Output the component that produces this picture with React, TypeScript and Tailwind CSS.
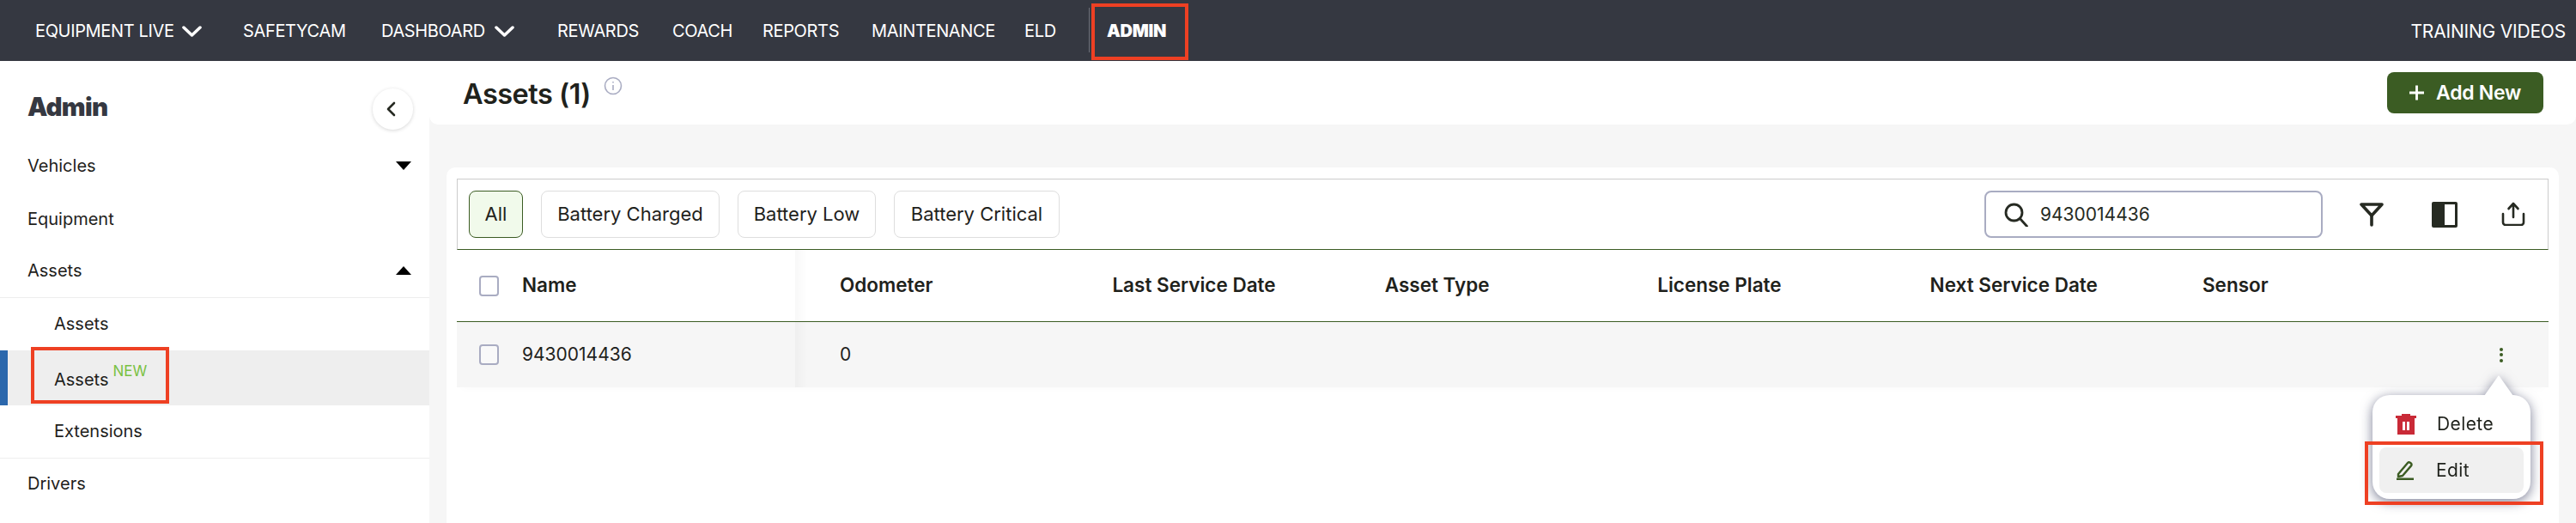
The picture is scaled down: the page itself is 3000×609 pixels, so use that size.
import type { ReactNode } from 'react'

const font = "font-['Inter',sans-serif]"

function NavChevron() {
  return (
    <svg viewBox="0 0 23 13" className="w-[23px] h-[13px] ml-[11px] mt-[1px]" fill="none" stroke="#fff" strokeWidth="3.5" strokeLinecap="round" strokeLinejoin="round">
      <path d="M2 2l9.5 9L21 2" />
    </svg>
  )
}

function Caret({ up }: { up?: boolean }) {
  return (
    <svg viewBox="0 0 18 10" className="w-[18px] h-[10px]" fill="#000">
      <path d={up ? 'M9 0l9 10H0z' : 'M0 0h18L9 10z'} />
    </svg>
  )
}

function Checkbox() {
  return <div className="w-[23px] h-[24px] border-[2.5px] border-[#a9acc2] rounded-[4px] bg-white/40 shrink-0" />
}

function Chip({ w, active, children }: { w: string; active?: boolean; children: ReactNode }) {
  return (
    <div
      className={`${w} h-[55px] flex items-center justify-center rounded-[8px] text-[22px] text-[#1f221c] border-[1.5px] ${
        active ? 'bg-[#f1faeb] border-[#3b5c23]' : 'bg-white border-[#dedede]'
      }`}
    >
      {children}
    </div>
  )
}

function SideRow({ label, caret, up }: { label: string; caret?: boolean; up?: boolean }) {
  return (
    <div className="h-[62px] pl-[32px] pr-[21px] flex items-center justify-between text-[20px] text-[#1f221c]">
      <span>{label}</span>
      {caret && <Caret up={up} />}
    </div>
  )
}

function Sidebar() {
  return (
    <aside className="w-[500px] shrink-0 bg-white">
      <div className="h-[91px] pl-[32px] pr-[19px] pt-[33px] flex items-start justify-between">
        <h2 className="text-[29.5px] leading-[40px] font-black tracking-[-0.7px] text-[#353841]">Admin</h2>
        <button className="w-[47px] h-[48px] -mt-[1px] rounded-full bg-white shadow-[0_1px_4px_rgba(0,0,0,0.16)] flex items-center justify-center">
          <svg viewBox="0 0 11 18" className="w-[11px] h-[18px] -ml-[4px]" fill="none" stroke="#262a22" strokeWidth="2.6" strokeLinecap="round" strokeLinejoin="round">
            <path d="M9 2L2 9l7 7" />
          </svg>
        </button>
      </div>
      <SideRow label="Vehicles" caret />
      <SideRow label="Equipment" />
      <div className="h-[60px] pl-[32px] pr-[21px] pb-[2px] flex items-center justify-between text-[20px] text-[#1f221c]">
        <span>Assets</span>
        <Caret up />
      </div>
      <div className="h-[1px] bg-[#eeeeee]" />
      <div className="h-[61px] pl-[63px] pb-[2px] flex items-center text-[20px] text-[#1f221c]">Assets</div>
      <div className="h-[64px] bg-[#eeeeee] border-l-[9px] border-[#2b67ac] pl-[54px] pt-[4px] flex items-center text-[20px] text-[#1f221c]">
        <span>Assets</span>
        <span className="ml-[5px] -mt-[19px] text-[17px] text-[#7ac143]">NEW</span>
      </div>
      <div className="h-[61px] pl-[63px] pb-[2px] flex items-center text-[20px] text-[#1f221c]">Extensions</div>
      <div className="h-[1px] bg-[#eeeeee]" />
      <div className="h-[60px] pl-[32px] pb-[2px] flex items-center text-[20px] text-[#1f221c]">Drivers</div>
    </aside>
  )
}

const columns = ['Odometer', 'Last Service Date', 'Asset Type', 'License Plate', 'Next Service Date', 'Sensor']

function Toolbar() {
  return (
    <div className="h-[83px] border-t border-x border-t-[#cccccc] border-x-[#cccccc] border-b-[1.5px] border-b-[#3b5c23] flex items-center pl-[13px] pr-[26px]">
      <div className="flex gap-[21px]">
        <Chip w="w-[63px]" active>All</Chip>
        <Chip w="w-[208px]">Battery Charged</Chip>
        <Chip w="w-[161px]">Battery Low</Chip>
        <Chip w="w-[193px]">Battery Critical</Chip>
      </div>
      <div className="ml-auto w-[394px] h-[55px] rounded-[8px] border-2 border-[#a9acc2] flex items-center pl-[21px] text-[21px] text-[#262a22]">
        <svg viewBox="0 0 28 28" className="w-[28px] h-[28px] shrink-0" fill="none" stroke="#262a22" strokeWidth="2.8" strokeLinecap="round">
          <circle cx="11.5" cy="11.5" r="9.5" />
          <path d="M18.5 18.5l8 9" />
        </svg>
        <span className="ml-[14px]">9430014436</span>
      </div>
      <svg viewBox="0 0 28 28" className="ml-[43px] w-[28px] h-[28px]" fill="none" stroke="#262a22" strokeWidth="3.6" strokeLinejoin="round" strokeLinecap="round">
        <path d="M2 2h24L14 15z" />
        <path d="M14 15v11" />
      </svg>
      <svg viewBox="0 0 30 30" className="ml-[56px] w-[30px] h-[30px]">
        <rect width="30" height="30" rx="2" fill="#262a22" />
        <rect x="15" y="3" width="12" height="24" fill="#fff" />
      </svg>
      <svg viewBox="0 0 28 28" className="ml-[51px] -mt-[2px] w-[28px] h-[28px]" fill="none" stroke="#262a22" strokeWidth="2.6" strokeLinecap="round" strokeLinejoin="round">
        <path d="M14 18V2M8.5 8L14 2l5.5 6" />
        <path d="M2 14v10a3 3 0 003 3h18a3 3 0 003-3V14" />
      </svg>
    </div>
  )
}

function Popup() {
  return (
    <div className="absolute left-[2763px] top-[437px] w-[184px] drop-shadow-[0_3px_7px_rgba(50,55,90,0.65)]">
      <svg viewBox="0 0 34 24" className="absolute left-[130px] top-0 w-[34px] h-[24px]" fill="#fff">
        <path d="M0 24L17 0l17 24z" />
      </svg>
      <div className="mt-[23px] h-[121px] rounded-[20px] bg-white p-[8px] pt-[8px] relative text-[21px] tracking-[0.4px] text-[#1f221c]">
        <div className="h-[53px] pb-[2px] flex items-center pl-[19px]">
          <svg viewBox="0 0 24 24" className="w-[24px] h-[24px] shrink-0">
            <path fill="#c92a37" d="M7 0h10v2h7v3H0V2h7zM2 5h20v19H2z" />
            <path fill="#fff" d="M8 9h3v10H8zM13 9h3v10h-3z" />
          </svg>
          <span className="ml-[24px]">Delete</span>
        </div>
        <div className="h-[53px] rounded-[8px] bg-[#f0f0f0] flex items-center pl-[20px]">
          <svg viewBox="0 0 20 23" className="w-[20px] h-[23px] shrink-0" fill="none" stroke="#3b5c23" strokeWidth="2.4" strokeLinejoin="round">
            <path d="M2 16L13 3a2 2 0 012.8-.3l1 .8a2 2 0 01.2 2.9L7 18l-5 1z" />
            <path d="M0 21.8h20" strokeWidth="2.6" />
          </svg>
          <span className="ml-[26px]">Edit</span>
        </div>
      </div>
    </div>
  )
}

export default function App() {
  return (
    <div className={`${font} relative w-[3000px] h-[609px] overflow-hidden bg-[#f6f6f6]`}>
      <nav className="h-[71px] bg-[#353841] flex items-center pl-[41px] pr-[12px] text-[20px] tracking-[-0.35px] text-white whitespace-nowrap">
        <span className="w-[160px]">EQUIPMENT LIVE</span>
        <NavChevron />
        <span className="w-[113px] ml-[48px]">SAFETYCAM</span>
        <span className="w-[121px] ml-[48px]">DASHBOARD</span>
        <NavChevron />
        <span className="w-[96px] ml-[50px]">REWARDS</span>
        <span className="w-[66px] ml-[38px]">COACH</span>
        <span className="w-[88px] ml-[39px]">REPORTS</span>
        <span className="w-[140px] ml-[39px]">MAINTENANCE</span>
        <span className="w-[37px] ml-[38px]">ELD</span>
        <div className="w-[1px] h-[52px] bg-[#6c6f78] ml-[38px] -mt-[2px]" />
        <span className="ml-[20px] font-black">ADMIN</span>
        <span className="ml-auto mt-[2px] text-[21px] tracking-[-0.2px]">TRAINING VIDEOS</span>
      </nav>
      <div className="flex h-[538px]">
        <Sidebar />
        <main className="flex-1 min-w-0">
          <header className="h-[74px] bg-white rounded-b-[10px] flex items-start pl-[39px] pr-[38px]">
            <h1 className="mt-[21px] text-[32.5px] leading-[36px] font-semibold tracking-[-0.5px] text-[#1f221c]">Assets (1)</h1>
            <svg viewBox="0 0 22 22" className="ml-[15px] mt-[18px] w-[22px] h-[22px]" fill="none" stroke="#a9acc2" strokeWidth="1.6">
              <circle cx="11" cy="11" r="9.5" />
              <path d="M11 10v6M11 6v1.6" />
            </svg>
            <button className="ml-auto mt-[13px] w-[182px] h-[48px] rounded-[8px] bg-[#3b5c23] text-white text-[23px] font-semibold tracking-[-0.3px] flex items-center justify-center">
              <svg viewBox="0 0 18 18" className="w-[17px] h-[18px] mr-[14px]" fill="none" stroke="#fff" strokeWidth="3">
                <path d="M9 0v18M0 9h18" />
              </svg>
              Add New
            </button>
          </header>
          <section className="mt-[50px] mx-[20px] h-[414px] bg-white rounded-t-[10px] pt-[13px] px-[12px]">
            <Toolbar />
            <div className="h-[84px] border-b-[1.5px] border-[#3b5c23] flex items-center text-[22.5px] font-semibold text-[#1f221c]">
              <div className="w-[394px] h-full flex items-center pl-[26px] gap-[27px] shrink-0">
                <Checkbox />
                <span className="-mt-[2px]">Name</span>
              </div>
              <div className="w-[14px] h-full bg-gradient-to-r from-[#f8f8f8] to-white shrink-0" />
              <div className="pl-[38px] -mt-[2px] flex">
                {columns.map(c => (
                  <div key={c} className="w-[317.4px]">{c}</div>
                ))}
              </div>
            </div>
            <div className="h-[76px] bg-[#f6f6f6] flex items-center text-[21px] text-[#1f221c] shadow-[0_8px_10px_-6px_rgba(0,0,0,0.02)]">
              <div className="w-[394px] h-full flex items-center pl-[26px] gap-[27px] shrink-0">
                <Checkbox />
                9430014436
              </div>
              <div className="w-[14px] h-full bg-gradient-to-r from-[#efefef] to-[#f6f6f6] shrink-0" />
              <div className="pl-[38px]">0</div>
              <div className="ml-auto mr-[53px] flex flex-col gap-[2.5px]">
                <span className="w-[4px] h-[4px] rounded-full bg-[#3b5c23]" />
                <span className="w-[4px] h-[4px] rounded-full bg-[#3b5c23]" />
                <span className="w-[4px] h-[4px] rounded-full bg-[#3b5c23]" />
              </div>
            </div>
          </section>
        </main>
      </div>
      <Popup />
      {/* red annotation boxes */}
      <div className="absolute left-[1271px] top-[4px] w-[113px] h-[66px] border-[4px] border-[#ee4023]" />
      <div className="absolute left-[36px] top-[404px] w-[161px] h-[66px] border-[4px] border-[#ee4023]" />
      <div className="absolute left-[2754px] top-[514px] w-[208px] h-[74px] border-[4px] border-[#ee4023]" />
    </div>
  )
}
